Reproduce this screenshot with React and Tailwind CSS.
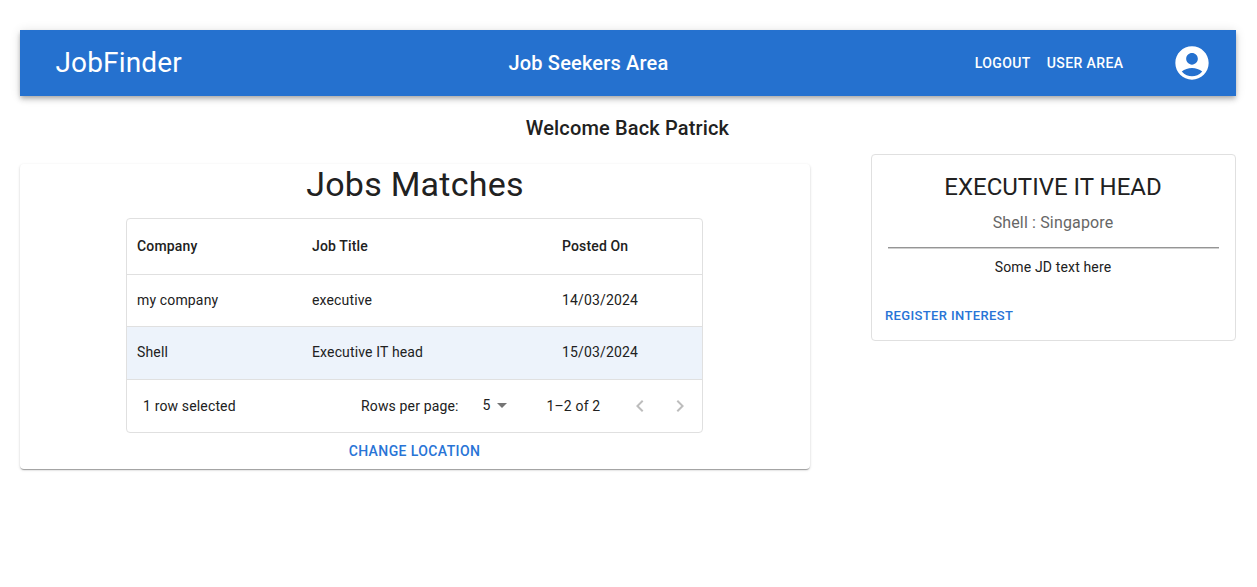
import React from 'react';

const columns = ['Company', 'Job Title', 'Posted On'];

const rows = [
  { cells: ['my company', 'executive', '14/03/2024'], selected: false },
  { cells: ['Shell', 'Executive IT head', '15/03/2024'], selected: true },
];

function Icon({ path, className }) {
  return (
    <svg viewBox="0 0 24 24" className={className} fill="currentColor" aria-hidden="true">
      <path d={path} />
    </svg>
  );
}

const ACCOUNT =
  'M12 2C6.48 2 2 6.48 2 12s4.48 10 10 10 10-4.48 10-10S17.52 2 12 2zm0 4c1.93 0 3.5 1.57 3.5 3.5S13.93 13 12 13s-3.5-1.57-3.5-3.5S10.07 6 12 6zm0 14c-2.03 0-4.43-.82-6.14-2.88C7.55 15.8 9.68 15 12 15s4.45.8 6.14 2.12C16.43 19.18 14.03 20 12 20z';
const ARROW_DOWN = 'M7 10l5 5 5-5z';
const CHEVRON_LEFT = 'M15.41 7.41L14 6l-6 6 6 6 1.41-1.41L10.83 12z';
const CHEVRON_RIGHT = 'M10 6L8.59 7.41 13.17 12l-4.58 4.59L10 18l6-6z';

function Header() {
  return (
    <header className="flex h-[66px] items-center bg-[#2571cf] text-white shadow-[0px_2px_4px_-1px_rgba(0,0,0,0.2),0px_4px_5px_0px_rgba(0,0,0,0.14),0px_1px_10px_0px_rgba(0,0,0,0.12)]">
      <div className="w-[488.5px] pl-[35.5px] text-[28px] leading-[42px] tracking-[0.005em]">JobFinder</div>
      <h1 className="flex-1 text-xl font-medium tracking-[0.0085em]">Job Seekers Area</h1>
      <nav className="flex gap-4 text-sm font-medium tracking-[0.02857em]">
        <button className="uppercase">Logout</button>
        <button className="uppercase">User Area</button>
      </nav>
      <button aria-label="Account" className="mr-6 ml-[48.5px] flex">
        <Icon path={ACCOUNT} className="size-10" />
      </button>
    </header>
  );
}

function JobsTable() {
  return (
    <div className="ml-[106px] h-[215px] w-[577px] rounded border border-[#e0e0e0] text-sm tracking-[0.01071em]">
      <div className="grid h-14 grid-cols-[175px_250px_150px] items-center border-b border-[#e0e0e0] pb-px font-medium">
        {columns.map((name) => (
          <div key={name} className="px-2.5">{name}</div>
        ))}
      </div>
      {rows.map((row) => (
        <div
          key={row.cells[0]}
          className={
            row.selected
              ? 'grid h-[53px] grid-cols-[175px_250px_150px] items-center border-b border-[#e0e0e0] bg-[#edf3fb] pb-0.5'
              : 'grid h-[52px] grid-cols-[175px_250px_150px] items-center border-b border-[#e0e0e0] pb-px'
          }
        >
          {row.cells.map((cell) => (
            <div key={cell} className="px-2.5">{cell}</div>
          ))}
        </div>
      ))}
      <div className="flex h-[52px] items-center pl-4">
        <span className="w-[218px]">1 row selected</span>
        <span className="w-[121.5px]">Rows per page:</span>
        <span className="flex w-[64px] items-center pb-0.5">
          5
          <Icon path={ARROW_DOWN} className="-ml-px size-6 text-[#757575]" />
        </span>
        <span className="w-[81.5px]">1–2 of 2</span>
        <Icon path={CHEVRON_LEFT} className="mr-4 mb-px size-6 text-[#bdbdbd]" />
        <Icon path={CHEVRON_RIGHT} className="mb-px size-6 text-[#bdbdbd]" />
      </div>
    </div>
  );
}

function JobCard() {
  return (
    <aside className="h-[187px] w-[365px] rounded border border-[#e0e0e0] px-4 pt-4 text-center">
      <h2 className="mr-px text-2xl leading-8 tracking-normal">EXECUTIVE IT HEAD</h2>
      <p className="mt-2 mr-px text-base leading-6 tracking-[0.00938em] text-[#666666]">Shell : Singapore</p>
      <hr className="mt-3 h-0.5 border-t border-b border-t-[#959595] border-b-[#d0d0d0]" />
      <p className="mt-2 mr-px text-sm leading-5 tracking-[0.01071em]">Some JD text here</p>
      <button className="mt-7 -ml-[3px] block text-[13px] leading-[22px] font-medium tracking-[0.02857em] text-[#2874d6] uppercase">
        Register Interest
      </button>
    </aside>
  );
}

export default function App() {
  return (
    <div className="min-h-[587px] bg-white pt-[30px] pr-[21px] pl-5 font-[Roboto,sans-serif] text-[#212121]">
      <Header />
      <h2 className="mt-4 mr-px text-center text-xl leading-8 font-medium tracking-[0.0075em]">Welcome Back Patrick</h2>
      <main className="flex items-start justify-between pt-2.5">
        <section className="mt-2.5 h-[305px] w-[790px] rounded text-center shadow-[0px_2px_1px_-1px_rgba(0,0,0,0.2),0px_1px_1px_0px_rgba(0,0,0,0.14),0px_1px_3px_0px_rgba(0,0,0,0.16)]">
          <h2 className="mb-3.5 text-[34px] leading-10 tracking-[0.00735em]">Jobs Matches</h2>
          <div className="text-left">
            <JobsTable />
          </div>
          <button className="mt-1.5 mr-px text-sm leading-6 font-medium tracking-[0.02857em] text-[#2874d6] uppercase">
            Change Location
          </button>
        </section>
        <JobCard />
      </main>
    </div>
  );
}
